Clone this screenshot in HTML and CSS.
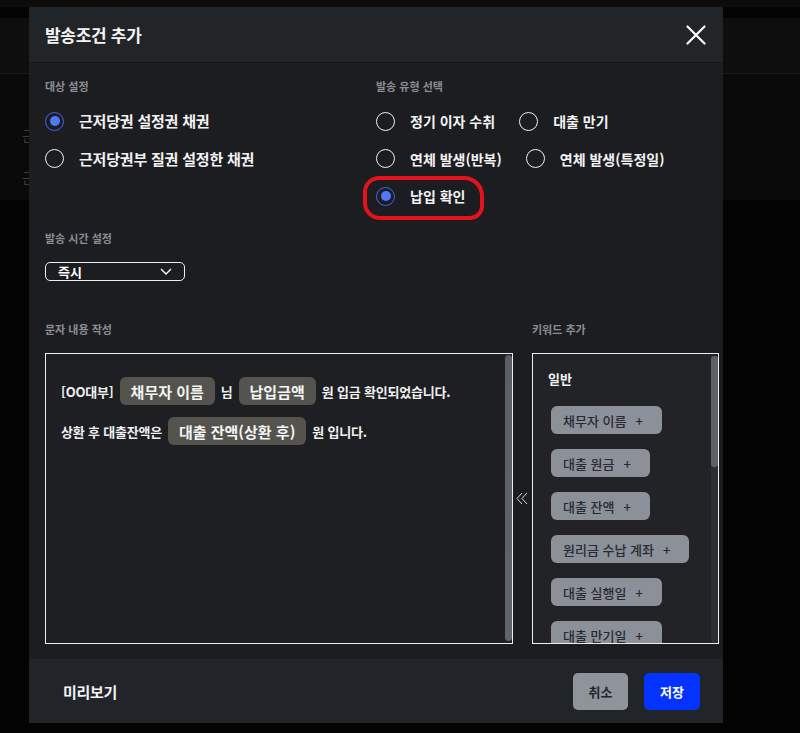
FILE: index.html
```html
<!DOCTYPE html>
<html lang="ko">
<head>
<meta charset="utf-8">
<title>발송조건 추가</title>
<link rel="stylesheet" href="styles.css">
</head>
<body>
<div class="page">
  <div class="page-top"></div>
  <div class="page-head"></div>
  <div class="page-band">
    <div class="page-row">근</div>
    <div class="page-row">근</div>
  </div>
</div>

<div class="modal">
  <div class="modal-header">
    <h2 class="modal-title">발송조건 추가</h2>
    <button class="close" type="button" aria-label="닫기">
      <svg width="20" height="20" viewBox="0 0 20 20"><path d="M1.5 1.5 L18.5 18.5 M18.5 1.5 L1.5 18.5" stroke="#ffffff" stroke-width="2.2" stroke-linecap="round" fill="none"/></svg>
    </button>
  </div>

  <div class="modal-body">
    <div class="top-grid">
      <div class="col">
        <div class="label">대상 설정</div>
        <div class="radio-list">
          <div class="radio-row">
            <label class="radio checked"><span class="circle"></span><span class="radio-text lg">근저당권 설정권 채권</span></label>
          </div>
          <div class="radio-row">
            <label class="radio"><span class="circle"></span><span class="radio-text lg">근저당권부 질권 설정한 채권</span></label>
          </div>
        </div>
      </div>
      <div class="col">
        <div class="label">발송 유형 선택</div>
        <div class="radio-list">
          <div class="radio-row">
            <label class="radio"><span class="circle"></span><span class="radio-text">정기 이자 수취</span></label>
            <label class="radio"><span class="circle"></span><span class="radio-text">대출 만기</span></label>
          </div>
          <div class="radio-row">
            <label class="radio"><span class="circle"></span><span class="radio-text">연체 발생(반복)</span></label>
            <label class="radio"><span class="circle"></span><span class="radio-text">연체 발생(특정일)</span></label>
          </div>
          <div class="radio-row">
            <label class="radio checked marked"><span class="circle"></span><span class="radio-text">납입 확인</span><span class="red-mark"></span></label>
          </div>
        </div>
      </div>
    </div>

    <div class="label time-label">발송 시간 설정</div>
    <div class="select">
      <span class="select-value">즉시</span>
      <svg class="chev" width="12" height="7" viewBox="0 0 12 7"><path d="M1 1 L6 6 L11 1" stroke="#ffffff" stroke-width="1.3" fill="none"/></svg>
    </div>

    <div class="bottom-grid">
      <div class="label">문자 내용 작성</div>
      <div></div>
      <div class="label">키워드 추가</div>

      <div class="editor">
        <div class="editor-content">
          <div class="line">
            <span class="plain">[OO대부]</span>
            <span class="var">채무자 이름</span>
            <span class="plain">님</span>
            <span class="var">납입금액</span>
            <span class="plain">원 입금 확인되었습니다.</span>
          </div>
          <div class="line">
            <span class="plain">상환 후 대출잔액은</span>
            <span class="var">대출 잔액(상환 후)</span>
            <span class="plain">원 입니다.</span>
          </div>
        </div>
        <div class="editor-scroll"></div>
      </div>

      <div class="arrow-col">
        <svg width="12" height="13" viewBox="0 0 12 13"><path d="M6 1 L1 6.5 L6 12 M11 1 L6 6.5 L11 12" stroke="#d8d8d8" stroke-width="1" fill="none"/></svg>
      </div>

      <div class="keywords">
        <div class="keywords-content">
          <div class="kw-title">일반</div>
          <div class="kw-list">
            <span class="kw">채무자 이름<span class="plus">+</span></span>
            <span class="kw">대출 원금<span class="plus">+</span></span>
            <span class="kw">대출 잔액<span class="plus">+</span></span>
            <span class="kw">원리금 수납 계좌<span class="plus">+</span></span>
            <span class="kw">대출 실행일<span class="plus">+</span></span>
            <span class="kw">대출 만기일<span class="plus">+</span></span>
          </div>
        </div>
        <div class="kw-track"><div class="kw-thumb"></div></div>
      </div>
    </div>
  </div>

  <div class="modal-footer">
    <span class="preview">미리보기</span>
    <div class="actions">
      <button class="btn btn-cancel" type="button">취소</button>
      <button class="btn btn-save" type="button">저장</button>
    </div>
  </div>
</div>
</body>
</html>
```

FILE: styles.css
```css
* { box-sizing: border-box; }

html, body {
  margin: 0;
  padding: 0;
}

body {
  width: 800px;
  height: 733px;
  overflow: hidden;
  background: #030303;
  font-family: "Noto Sans CJK KR", "Noto Sans", sans-serif;
  color: #f2f2f2;
  position: relative;
}

/* dimmed page behind the dialog */
.page-top {
  height: 7px;
  background: #0c0c0c;
}

.page-head {
  margin-top: 11px;
  height: 56px;
  background: #0e0e0e;
  border-bottom: 1px solid #1b1b1b;
}

.page-band {
  height: 126px;
  background: #0a0a0a;
  padding: 52px 0 0 22px;
  display: flex;
  flex-direction: column;
  gap: 24px;
}

.page-row {
  font-size: 14px;
  line-height: 18px;
  color: #3a3a3a;
}

/* dialog */
.modal {
  position: absolute;
  left: 29px;
  top: 7px;
  width: 694px;
  height: 716px;
  background: #1c1d21;
  display: flex;
  flex-direction: column;
}

.modal-header {
  height: 56px;
  flex: none;
  background: #222528;
  border-bottom: 1px solid #121315;
  display: flex;
  align-items: center;
  justify-content: space-between;
  padding: 0 17px 0 16px;
}

.modal-title {
  margin: 0;
  font-size: 17px;
  font-weight: 700;
  letter-spacing: -0.3px;
  color: #f4f4f4;
}

.close {
  background: none;
  border: 0;
  padding: 0;
  width: 20px;
  height: 20px;
  display: flex;
}

.modal-body {
  flex: 1;
  padding: 15px 0 0 16px;
}

.label {
  font-size: 11px;
  line-height: 16px;
  font-weight: 700;
  color: #8a8d93;
}

.top-grid {
  display: grid;
  grid-template-columns: 331px 1fr;
}

.radio-list {
  margin-top: 17px;
  display: flex;
  flex-direction: column;
  gap: 17.5px;
}

.radio-row {
  display: flex;
  gap: 24px;
  height: 20px;
  align-items: center;
}

.radio {
  display: flex;
  align-items: center;
  gap: 15px;
  position: relative;
}

.circle {
  width: 19px;
  height: 19px;
  border-radius: 50%;
  border: 1.5px solid #f2f2f2;
  display: flex;
  align-items: center;
  justify-content: center;
  flex: none;
}

.radio.checked .circle {
  border-color: #4763e6;
}

.radio.checked .circle::after {
  content: "";
  width: 10px;
  height: 10px;
  border-radius: 50%;
  background: #5277ff;
}

.radio-text {
  font-size: 14px;
  line-height: 20px;
  font-weight: 700;
  color: #f2f2f2;
  white-space: nowrap;
}

.radio-text.lg {
  font-size: 15px;
  letter-spacing: -0.2px;
}

.red-mark {
  position: absolute;
  left: -13px;
  top: -10px;
  width: 121px;
  height: 44px;
  border: 4px solid #e3121c;
  border-radius: 16px 20px 14px 17px;
}

.time-label {
  margin-top: 24px;
}

.select {
  margin-top: 16px;
  width: 140px;
  height: 19px;
  border: 1px solid #efefef;
  border-radius: 5px;
  display: flex;
  align-items: center;
  justify-content: space-between;
  padding: 0 12px 0 12px;
}

.select-value {
  font-size: 13px;
  line-height: 17px;
  font-weight: 700;
  color: #ffffff;
}

.chev {
  display: block;
}

.bottom-grid {
  margin-top: 40px;
  display: grid;
  grid-template-columns: 468px 19px 187px;
  grid-template-rows: 16px 291px;
  row-gap: 16px;
}

.editor {
  border: 1px solid #ededed;
  background: #1e1f23;
  display: flex;
}

.editor-content {
  flex: 1;
  padding: 23px 0 0 15px;
  display: flex;
  flex-direction: column;
  gap: 12px;
}

.line {
  display: flex;
  align-items: center;
  gap: 6px;
  height: 28px;
}

.plain {
  font-size: 13px;
  font-weight: 700;
  letter-spacing: -0.2px;
  color: #f0f0f0;
  white-space: nowrap;
}

.var {
  height: 28px;
  display: inline-flex;
  align-items: center;
  padding: 0 11px;
  border-radius: 6px;
  background: #55534d;
  font-size: 15px;
  font-weight: 700;
  color: #f4f4f4;
  white-space: nowrap;
}

.editor-scroll {
  width: 7px;
  margin: 1px 0 2px 0;
  border-radius: 4px;
  background: linear-gradient(#5a5e66, #60646c);
}

.arrow-col {
  display: flex;
  align-items: center;
  justify-content: center;
  padding-right: 2px;
}

.keywords {
  border: 1px solid #ededed;
  background: #212327;
  display: flex;
  overflow: hidden;
}

.keywords-content {
  flex: 1;
  padding: 16px 0 0 15px;
  overflow: hidden;
}

.kw-title {
  font-size: 13px;
  line-height: 18px;
  font-weight: 700;
  color: #f4f4f4;
}

.kw-list {
  margin-top: 18px;
  margin-left: 3px;
  display: flex;
  flex-direction: column;
  align-items: flex-start;
  gap: 15px;
}

.kw {
  height: 28px;
  flex: none;
  display: inline-flex;
  align-items: center;
  gap: 9px;
  padding: 0 19px 0 12px;
  border-radius: 6px;
  background: #8b9099;
  color: #282a2f;
  font-size: 13px;
  font-weight: 500;
  white-space: nowrap;
}

.plus {
  font-size: 13px;
  font-weight: 500;
}

.kw-track {
  width: 7px;
  margin: 2px 0 0 0;
  background: #2b2e33;
  border-radius: 3px;
}

.kw-thumb {
  height: 111px;
  border-radius: 3px;
  background: #5d6068;
}

.modal-footer {
  height: 64px;
  flex: none;
  background: #212428;
  display: flex;
  align-items: center;
  justify-content: space-between;
  padding: 0 23px 0 34px;
}

.preview {
  font-size: 15px;
  font-weight: 700;
  color: #f4f4f4;
  letter-spacing: -0.3px;
}

.actions {
  display: flex;
  gap: 16px;
}

.btn {
  height: 37px;
  width: 55px;
  border: 0;
  border-radius: 5px;
  font-family: inherit;
  font-size: 13px;
  font-weight: 700;
  padding: 0;
}

.btn-cancel {
  background: #8f949b;
  color: #24262a;
}

.btn-save {
  width: 56px;
  background: #0433ff;
  color: #ffffff;
}
```
